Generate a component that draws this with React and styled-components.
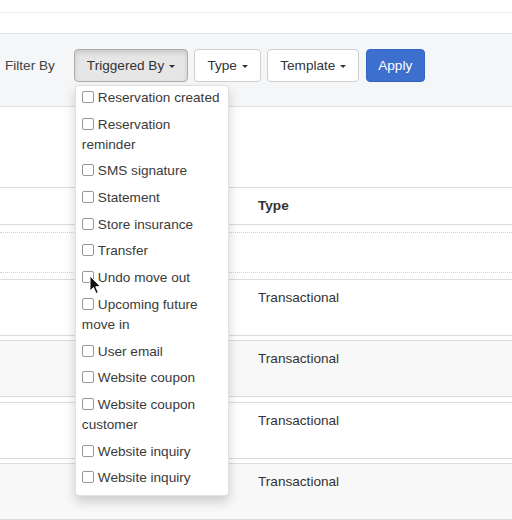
import React from 'react';
import styled, { createGlobalStyle } from 'styled-components';

const GlobalStyle = createGlobalStyle`
  body {
    margin: 0;
    font-family: "Liberation Sans", Arial, sans-serif;
    font-size: 13.6px;
    line-height: 19.4px;
    color: #333;
    background: #fff;
  }
`

const Page = styled.div`
  position: relative;
  width: 512px;
  height: 520px;
  overflow: hidden;
`

const TopStrip = styled.div`
  height: 12px;
  border-bottom: 1px solid #ececec;
  margin-bottom: 20px;
`

const FilterBar = styled.div`
  box-sizing: border-box;
  height: 74px;
  display: flex;
  align-items: flex-start;
  gap: 6.5px;
  padding: 15px 0 0 5px;
  background: #f5f6f8;
  border-top: 1px solid #dedfe2;
  border-bottom: 1px solid #e2e3e6;
`

const FilterLabel = styled.span`
  color: #444;
  line-height: 33px;
  margin-right: 12.5px;
`

const DropdownWrap = styled.div`
  position: relative;
  z-index: 2;
`

const Button = styled.button`
  box-sizing: border-box;
  height: 33px;
  padding: 0 ${p => (p.$primary ? '11.6px' : '12px')};
  font-family: inherit;
  font-size: 13.6px;
  line-height: 31px;
  border-radius: 4px;
  border: 1px solid ${p => (p.$primary ? '#3366c2' : p.$active ? '#adadad' : '#cfcfcf')};
  background: ${p => (p.$primary ? '#3c6fce' : p.$active ? '#e6e6e6' : '#fff')};
  color: ${p => (p.$primary ? '#fff' : '#333')};
  box-shadow: ${p => (p.$active ? 'inset 0 3px 5px rgba(0,0,0,.125)' : 'none')};
  white-space: nowrap;
  cursor: pointer;
`

const Caret = styled.span`
  display: inline-block;
  width: 0;
  height: 0;
  margin-left: 1px;
  vertical-align: middle;
  border-top: 3.4px solid #333;
  border-left: 3.4px solid transparent;
  border-right: 3.4px solid transparent;
`

const Menu = styled.div`
  position: absolute;
  top: calc(100% + 3px);
  left: 1px;
  box-sizing: border-box;
  width: 154px;
  padding: 2px 6px 0;
  background: #fff;
  border: 1px solid rgba(0,0,0,.12);
  border-radius: 4px;
  box-shadow: 0 6px 12px rgba(0,0,0,.175);
`

const Option = styled.label`
  display: block;
  line-height: 20px;
  margin-bottom: 6.7px;
  color: #3a3a3a;
`

const Check = styled.span`
  display: inline-block;
  box-sizing: border-box;
  width: 12px;
  height: 12px;
  margin: 3px 4px 0 0;
  vertical-align: top;
  border: 1px solid #999;
  border-radius: 2px;
  background: #fff;
`

const Spacer = styled.div`
  height: 80px;
`

const Row = styled.div`
  box-sizing: border-box;
  display: grid;
  grid-template-columns: 250px 1fr;
  height: ${p => p.$h}px;
  margin-top: ${p => p.$gap || 0}px;
  border-top: 1px ${p => (p.$dotted ? 'dotted #cfcfcf' : 'solid #dcdcdc')};
  border-bottom: 1px ${p => (p.$dotted ? 'dotted #cfcfcf' : 'solid #dcdcdc')};
  background: ${p => (p.$striped ? '#f8f8f8' : '#fff')};
`

const Cell = styled.div`
  padding: 8px;
  line-height: 19.4px;
  font-weight: ${p => (p.$head ? 'bold' : 'normal')};
  color: #333;
`

const Pointer = styled.svg`
  position: absolute;
  left: 89px;
  top: 275px;
  z-index: 5;
`

const options = [
  'Reservation created',
  'Reservation reminder',
  'SMS signature',
  'Statement',
  'Store insurance',
  'Transfer',
  'Undo move out',
  'Upcoming future move in',
  'User email',
  'Website coupon',
  'Website coupon customer',
  'Website inquiry',
  'Website inquiry',
]

export default function App() {
  return (
    <Page>
      <GlobalStyle />
      <TopStrip />
      <FilterBar>
        <FilterLabel>Filter By</FilterLabel>
        <DropdownWrap>
          <Button $active>Triggered By <Caret /></Button>
          <Menu>
            {options.map((o, i) => (
              <Option key={i}><Check />{o}</Option>
            ))}
          </Menu>
        </DropdownWrap>
        <Button>Type <Caret /></Button>
        <Button>Template <Caret /></Button>
        <Button $primary>Apply</Button>
      </FilterBar>
      <Spacer />
      <Row $h={38}>
        <Cell $head />
        <Cell $head>Type</Cell>
      </Row>
      <Row $h={41} $gap={7} $dotted />
      <Row $h={57} $gap={6}><Cell /><Cell>Transactional</Cell></Row>
      <Row $h={57} $gap={4.3} $striped><Cell /><Cell>Transactional</Cell></Row>
      <Row $h={57} $gap={4.3}><Cell /><Cell>Transactional</Cell></Row>
      <Row $h={57} $gap={4.3} $striped><Cell /><Cell>Transactional</Cell></Row>
      <Pointer width="13" height="20" viewBox="0 0 13 20">
        <path d="M1 1 L1 16 L4.5 12.5 L7 18.5 L9.3 17.5 L6.8 11.7 L11.5 11.7 Z" fill="#111" stroke="#fff" strokeWidth="1" strokeLinejoin="round" />
      </Pointer>
    </Page>
  )
}
